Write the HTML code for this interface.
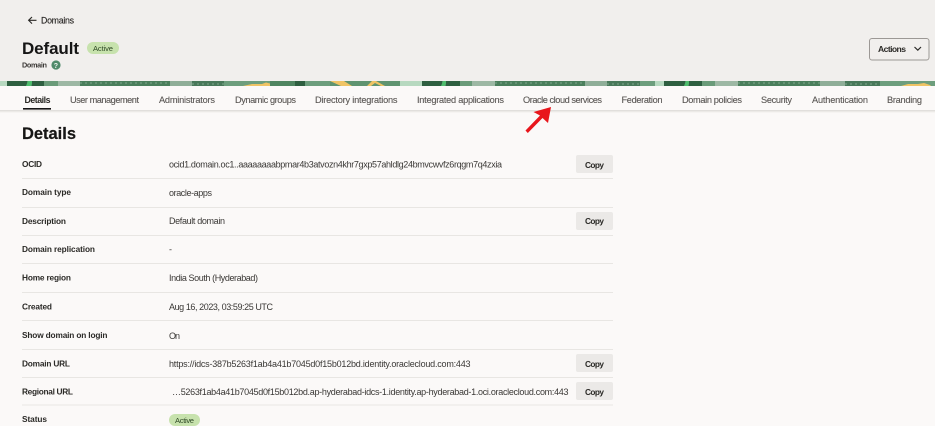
<!DOCTYPE html>
<html lang="en"><head><meta charset="utf-8"><title>Default Domain</title>
<style>
html,body{margin:0;padding:0;width:935px;height:426px;overflow:hidden;background:#fbf9f8}
svg{display:block;font-family:"Liberation Sans",sans-serif}
.t{font-size:9.2px;fill:#5a5754;stroke:#5a5754;stroke-width:.12}
.l{font-size:8.3px;fill:#2b2927;font-weight:700}
.v{font-size:9px;fill:#3a3836}
.b{font-size:8.3px;fill:#2b2927;font-weight:700}
</style></head><body>
<svg width="935" height="426" viewBox="0 0 935 426" xmlns="http://www.w3.org/2000/svg">
<defs><filter id="s" x="-5%" y="-5%" width="110%" height="110%"><feGaussianBlur stdDeviation="0.3"/></filter>
<linearGradient id="sh" x1="0" y1="0" x2="0" y2="1"><stop offset="0" stop-color="#dcdad7"/><stop offset="1" stop-color="#fbf9f8"/></linearGradient></defs>
<rect width="935" height="426" fill="#fbf9f8"/>
<rect width="935" height="81" fill="#f1efed"/>
<!-- banner -->
<g filter="url(#s)">
<rect x="0" y="81" width="935" height="5" fill="#4f8561"/>
<rect x="0" y="81" width="7" height="5" fill="#b7d9c0"/>
<rect x="7" y="81" width="20" height="5" fill="#2f5e40"/>
<polygon points="28,81 33,81 31,86 26,86" fill="#4fbd6d"/>
<rect x="32" y="81" width="12" height="5" fill="#2f5e40"/>
<rect x="44" y="81" width="14" height="5" fill="#6a9b79"/>
<rect x="58" y="81" width="22" height="5" fill="#9db8a4"/>
<rect x="80" y="81" width="90" height="5" fill="#4c7f5c"/>
<rect x="170" y="81" width="22" height="5" fill="#8fae98"/>
<rect x="192" y="81" width="32" height="5" fill="#48795a"/>
<rect x="224" y="81" width="46" height="5" fill="#6d9e7d"/>
<polygon points="243,86 252,84 262,84 266,82.500 272,84 276,86" fill="#f0c465"/>
<rect x="270" y="81" width="25" height="5" fill="#4f8561"/>
<rect x="295" y="81" width="10" height="5" fill="#2f5e40"/>
<rect x="305" y="81" width="25" height="5" fill="#6d9e7d"/>
<rect x="330" y="81" width="70" height="5" fill="#5f9470"/>
<polygon points="330,81 344,81 352,86 341,86" fill="#f0c465"/>
<polygon points="372,81 376,81 385,86 381,86 375,83 371,86 367,86" fill="#f0c465"/>
<rect x="400" y="81" width="22" height="5" fill="#b7d9c0"/>
<rect x="422" y="81" width="20" height="5" fill="#2f5e40"/>
<polygon points="443,81 447,81 445,86 441,86" fill="#4fbd6d"/>
<rect x="446" y="81" width="14" height="5" fill="#2f5e40"/>
<rect x="460" y="81" width="12" height="5" fill="#6a9b79"/>
<rect x="472" y="81" width="23" height="5" fill="#9db8a4"/>
<rect x="495" y="81" width="90" height="5" fill="#4c7f5c"/>
<rect x="585" y="81" width="22" height="5" fill="#8fae98"/>
<rect x="607" y="81" width="33" height="5" fill="#48795a"/>
<rect x="640" y="81" width="15" height="5" fill="#6d9e7d"/>
<rect x="655" y="81" width="9" height="5" fill="#b7d9c0"/>
<rect x="664" y="81" width="21" height="5" fill="#2f5e40"/>
<polygon points="686,81 690,81 688,86 684,86" fill="#4fbd6d"/>
<rect x="689" y="81" width="13" height="5" fill="#2f5e40"/>
<rect x="702" y="81" width="13" height="5" fill="#6a9b79"/>
<rect x="715" y="81" width="23" height="5" fill="#9db8a4"/>
<rect x="738" y="81" width="82" height="5" fill="#4c7f5c"/>
<rect x="820" y="81" width="25" height="5" fill="#8fae98"/>
<rect x="845" y="81" width="35" height="5" fill="#48795a"/>
<rect x="880" y="81" width="55" height="5" fill="#6d9e7d"/>
<polygon points="901,86 908,84 918,84 924,83 930,85 931,86" fill="#f0c465"/>
<path d="M80 83H170M192 84H224M495 83H585M607 84H640M738 83H820M845 84H880" stroke="#7fa78c" stroke-width="1" stroke-dasharray="2 3" fill="none"/>
</g>
<rect x="0" y="110" width="935" height="3" fill="url(#sh)"/>
<g filter="url(#s)">
<!-- back -->
<path d="M36.5 20.3H28.8M32 17L28.6 20.3L32 23.6" fill="none" stroke="#2b2927" stroke-width="1.1"/>
<text x="41" y="23.500" font-size="8.800" fill="#2b2927" stroke="#2b2927" stroke-width=".15" textLength="33">Domains</text>
<text x="22" y="54" font-size="17" font-weight="700" fill="#141312" textLength="57">Default</text>
<rect x="87" y="42" width="32" height="12" rx="6" fill="#c7e2ad"/>
<text x="93" y="51" font-size="7.600" fill="#2f4a25" textLength="20">Active</text>
<text x="22" y="67.500" font-size="7.300" font-weight="700" fill="#3a3836" textLength="25">Domain</text>
<circle cx="56" cy="65" r="4.600" fill="#4f8a6b"/>
<text x="53.800" y="68" font-size="7" font-weight="700" fill="#eef5ef">?</text>
<!-- actions -->
<rect x="869.500" y="38.500" width="59.500" height="21.500" rx="2.500" fill="#f1efed" stroke="#9c9895"/>
<text x="878" y="52" font-size="8.600" font-weight="700" fill="#2b2927" textLength="28">Actions</text>
<path d="M914.500 47L917.800 50.200L921 47" fill="none" stroke="#2b2927" stroke-width="1.200"/>
<!-- tabs -->
<text x="24.500" y="103" font-size="8.800" font-weight="700" fill="#2b2927" textLength="26">Details</text>
<rect x="23" y="108" width="28" height="1.600" fill="#161513"/>
<text x="70" y="103" class="t" textLength="69">User management</text>
<text x="159" y="103" class="t" textLength="56">Administrators</text>
<text x="235" y="103" class="t" textLength="61">Dynamic groups</text>
<text x="315" y="103" class="t" textLength="82.500">Directory integrations</text>
<text x="417" y="103" class="t" textLength="87">Integrated applications</text>
<text x="523" y="103" class="t" textLength="79">Oracle cloud services</text>
<text x="621.500" y="103" class="t" textLength="41">Federation</text>
<text x="682" y="103" class="t" textLength="60">Domain policies</text>
<text x="761" y="103" class="t" textLength="31">Security</text>
<text x="812" y="103" class="t" textLength="56">Authentication</text>
<text x="887" y="103" class="t" textLength="35">Branding</text>
<!-- heading -->
<text x="22" y="139" font-size="16.500" font-weight="700" fill="#161513" stroke="#161513" stroke-width=".2" textLength="54">Details</text>
<!-- rules -->
<g fill="#e8e6e3">
<rect x="22" y="178" width="591" height="1"/><rect x="22" y="207" width="591" height="1"/>
<rect x="22" y="235" width="591" height="1"/><rect x="22" y="263" width="591" height="1"/>
<rect x="22" y="292" width="591" height="1"/><rect x="22" y="320" width="591" height="1"/>
<rect x="22" y="349" width="591" height="1"/><rect x="22" y="377" width="591" height="1"/>
<rect x="22" y="404.500" width="591" height="1"/>
</g>
<!-- labels -->
<text x="22" y="167" class="l" textLength="20">OCID</text>
<text x="22" y="195" class="l" textLength="49">Domain type</text>
<text x="22" y="224" class="l" textLength="44">Description</text>
<text x="22" y="252" class="l" textLength="73">Domain replication</text>
<text x="22" y="280.500" class="l" textLength="49">Home region</text>
<text x="22" y="309.500" class="l" textLength="30">Created</text>
<text x="22" y="338" class="l" textLength="85.500">Show domain on login</text>
<text x="22" y="366.500" class="l" textLength="48">Domain URL</text>
<text x="22" y="394.500" class="l" textLength="51">Regional URL</text>
<text x="22" y="422" class="l" textLength="25">Status</text>
<!-- values -->
<text x="169" y="167.500" class="v" textLength="333">ocid1.domain.oc1..aaaaaaaabpmar4b3atvozn4khr7gxp57ahldlg24bmvcwvfz6rqgm7q4zxia</text>
<text x="169" y="196" class="v" textLength="43">oracle-apps</text>
<text x="169" y="224" class="v" textLength="56">Default domain</text>
<text x="169" y="252.500" class="v" textLength="2.500">-</text>
<text x="169" y="281" class="v" textLength="89">India South (Hyderabad)</text>
<text x="169" y="310" class="v" textLength="104">Aug 16, 2023, 03:59:25 UTC</text>
<text x="169" y="339" class="v" textLength="11">On</text>
<text x="169" y="367" class="v" textLength="301.500">https://idcs-387b5263f1ab4a41b7045d0f15b012bd.identity.oraclecloud.com:443</text>
<text x="172" y="395" class="v" textLength="396.500">…5263f1ab4a41b7045d0f15b012bd.ap-hyderabad-idcs-1.identity.ap-hyderabad-1.oci.oraclecloud.com:443</text>
<rect x="169" y="414" width="31" height="12" rx="6" fill="#c7e2ad"/>
<text x="175" y="423" font-size="7.600" fill="#2f4a25" textLength="19">Active</text>
<!-- copy buttons -->
<g fill="#ebe9e7">
<rect x="576" y="155" width="37" height="18" rx="2"/><rect x="576" y="212" width="37" height="18" rx="2"/>
<rect x="576" y="354" width="37" height="18" rx="2"/><rect x="576" y="382" width="37" height="18" rx="2"/>
</g>
<text x="585" y="168" class="b" textLength="19">Copy</text>
<text x="585" y="224" class="b" textLength="19">Copy</text>
<text x="585" y="367" class="b" textLength="19">Copy</text>
<text x="585" y="395" class="b" textLength="19">Copy</text>
<!-- red arrow -->
<polygon points="551,107 548,123 542.500,118 527.800,133 525.500,130.500 540,115.500 533.500,112" fill="#e8141a"/>
</g>
</svg>
</body></html>
